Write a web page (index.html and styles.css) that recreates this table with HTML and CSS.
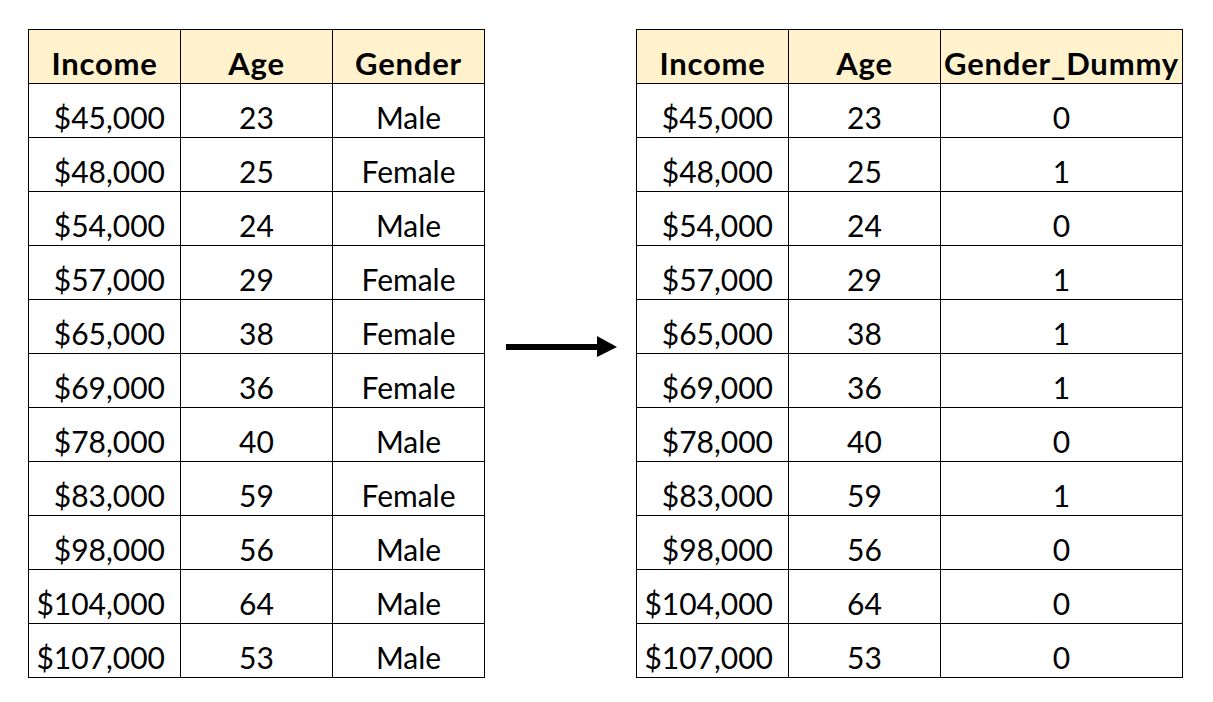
FILE: index.html
```html
<!DOCTYPE html>
<html>
<head>
<meta charset="utf-8">
<link rel="stylesheet" href="styles.css">
</head>
<body>
<div class="page">
  <table class="grid">
    <thead>
      <tr><th class="c1">Income</th><th class="c2">Age</th><th class="c3">Gender</th></tr>
    </thead>
    <tbody>
      <tr><td class="num">$45,000</td><td>23</td><td>Male</td></tr>
      <tr><td class="num">$48,000</td><td>25</td><td>Female</td></tr>
      <tr><td class="num">$54,000</td><td>24</td><td>Male</td></tr>
      <tr><td class="num">$57,000</td><td>29</td><td>Female</td></tr>
      <tr><td class="num">$65,000</td><td>38</td><td>Female</td></tr>
      <tr><td class="num">$69,000</td><td>36</td><td>Female</td></tr>
      <tr><td class="num">$78,000</td><td>40</td><td>Male</td></tr>
      <tr><td class="num">$83,000</td><td>59</td><td>Female</td></tr>
      <tr><td class="num">$98,000</td><td>56</td><td>Male</td></tr>
      <tr><td class="num">$104,000</td><td>64</td><td>Male</td></tr>
      <tr><td class="num">$107,000</td><td>53</td><td>Male</td></tr>
    </tbody>
  </table>
  <div class="arrow-col">
    <svg class="arrow" width="112" height="22" viewBox="0 0 112 22">
      <rect x="0" y="8" width="92" height="6" fill="#000"/>
      <polygon points="91,0 111,11 91,21" fill="#000"/>
    </svg>
  </div>
  <table class="grid">
    <thead>
      <tr><th class="c1">Income</th><th class="c2">Age</th><th class="c3w">Gender_Dummy</th></tr>
    </thead>
    <tbody>
      <tr><td class="num">$45,000</td><td>23</td><td>0</td></tr>
      <tr><td class="num">$48,000</td><td>25</td><td>1</td></tr>
      <tr><td class="num">$54,000</td><td>24</td><td>0</td></tr>
      <tr><td class="num">$57,000</td><td>29</td><td>1</td></tr>
      <tr><td class="num">$65,000</td><td>38</td><td>1</td></tr>
      <tr><td class="num">$69,000</td><td>36</td><td>1</td></tr>
      <tr><td class="num">$78,000</td><td>40</td><td>0</td></tr>
      <tr><td class="num">$83,000</td><td>59</td><td>1</td></tr>
      <tr><td class="num">$98,000</td><td>56</td><td>0</td></tr>
      <tr><td class="num">$104,000</td><td>64</td><td>0</td></tr>
      <tr><td class="num">$107,000</td><td>53</td><td>0</td></tr>
    </tbody>
  </table>
</div>
</body>
</html>
```

FILE: styles.css
```css
html, body {
  margin: 0;
  padding: 0;
  background: #fff;
}
.page {
  display: flex;
  align-items: flex-start;
  padding: 29px 0 0 28px;
  font-family: "Lato", "Open Sans", sans-serif;
  color: #000;
}
.grid {
  border-collapse: collapse;
  table-layout: fixed;
}
.grid th, .grid td {
  border: 1px solid #000;
  height: 54px;
  padding: 0 0 4px 0;
  box-sizing: border-box;
  vertical-align: bottom;
  text-align: center;
  font-size: 30px;
  line-height: 32px;
  white-space: nowrap;
  overflow: hidden;
}
.grid th {
  background: #fff2cc;
  font-weight: 700;
  font-size: 31px;
  letter-spacing: 0.8px;
}
.grid td {
  font-weight: 400;
}
.grid .c1, .grid .c2, .grid .c3 {
  width: 152px;
}
.grid .c3w {
  width: 242px;
}
.grid td.num {
  text-align: right;
  padding-right: 15px;
}
.arrow-col {
  width: 151px;
  height: 648px;
  display: flex;
  align-items: center;
  justify-content: center;
}
.arrow {
  display: block;
  margin: 0 0 12px 3px;
}
```
